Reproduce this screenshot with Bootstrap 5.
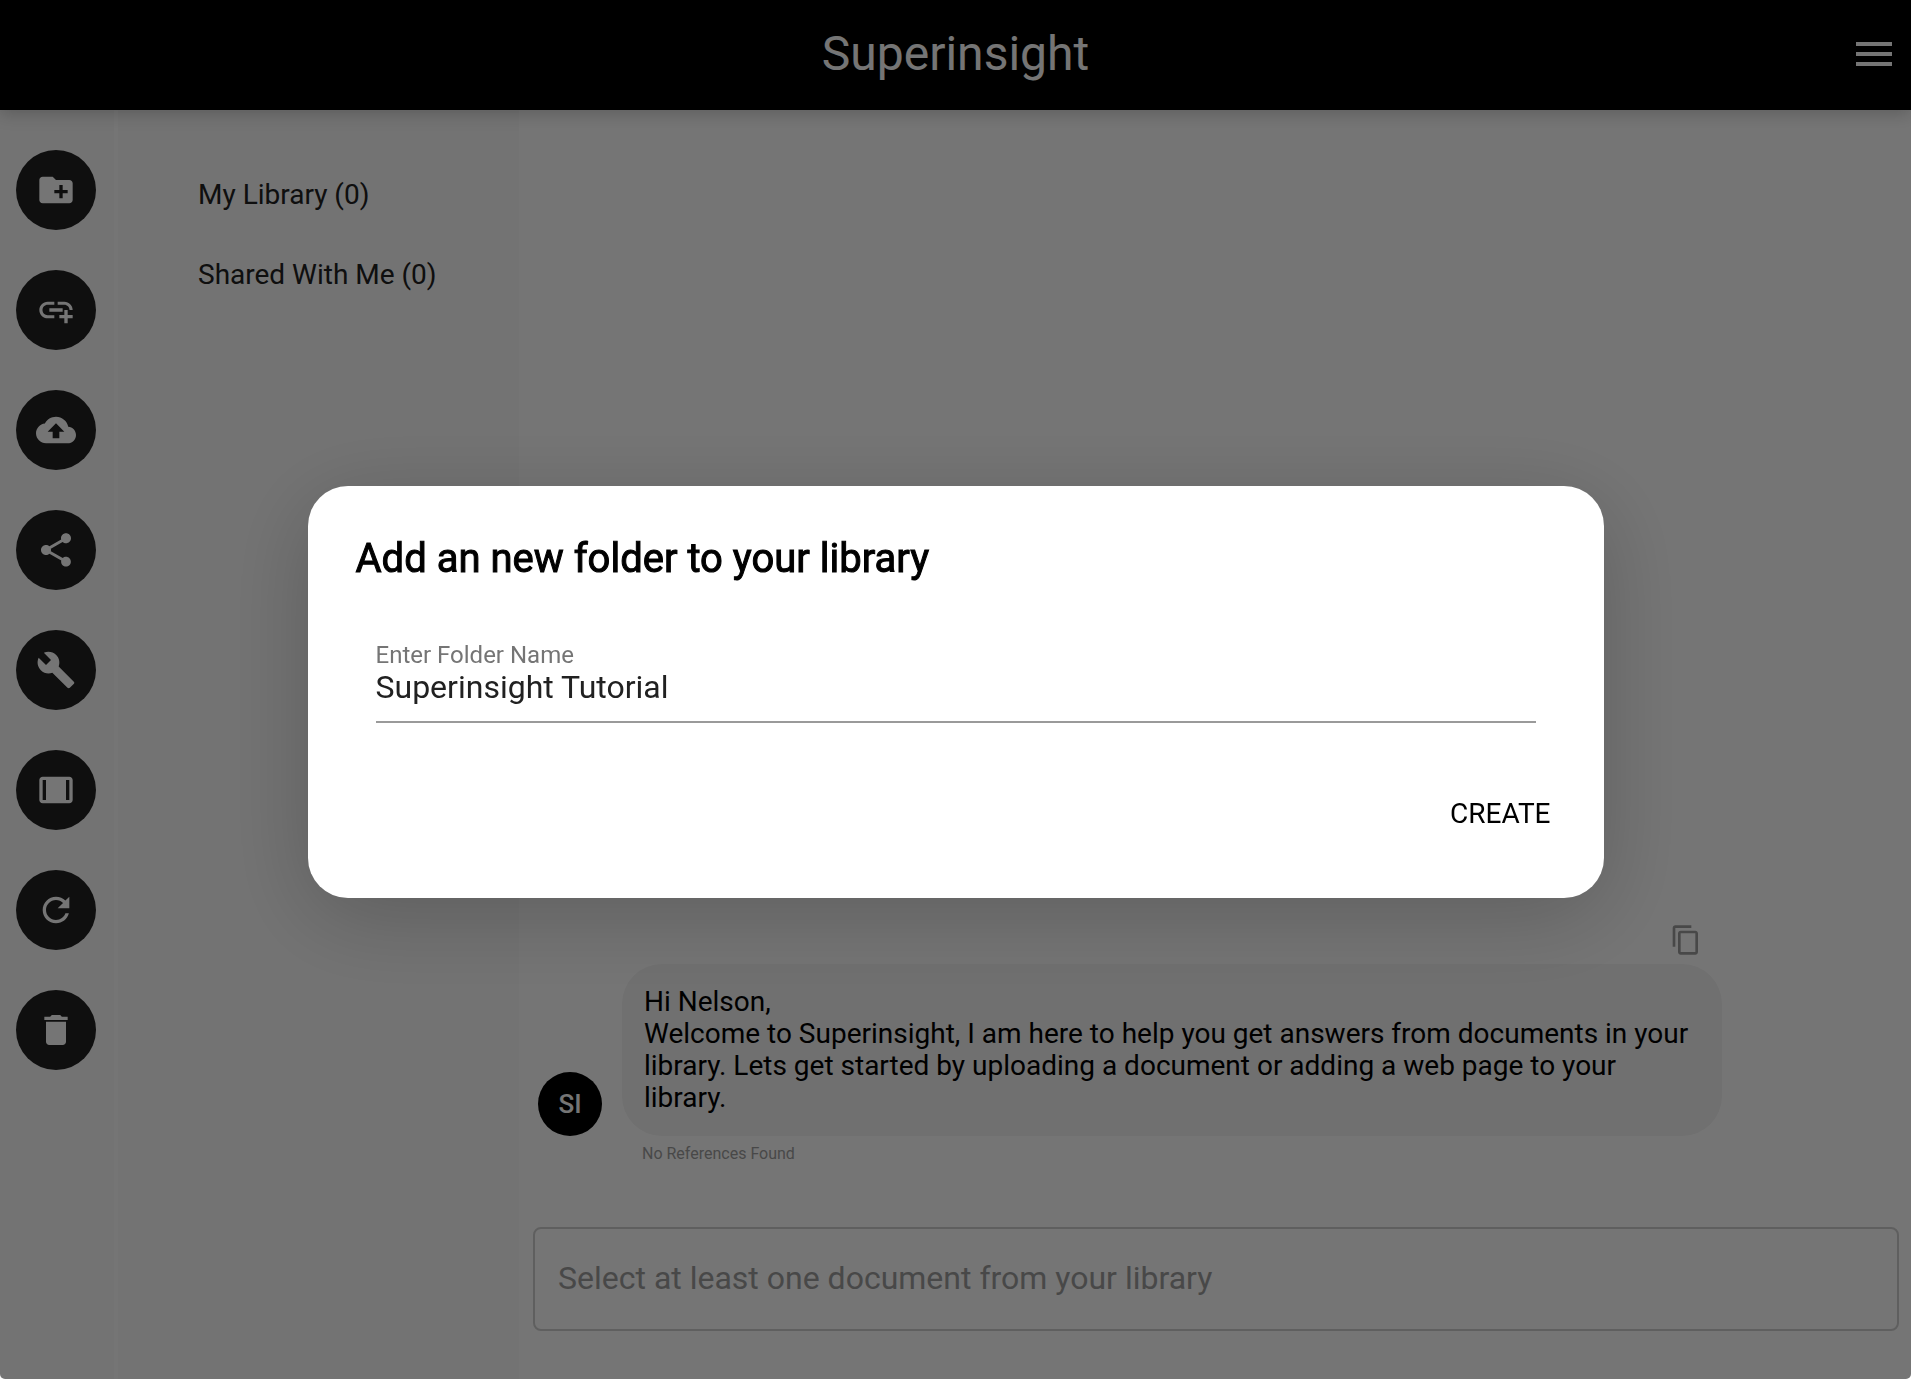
<!DOCTYPE html>
<html lang="en">
<head>
<meta charset="utf-8">
<meta name="viewport" content="width=device-width, initial-scale=1">
<title>Superinsight</title>
<link href="https://cdn.jsdelivr.net/npm/bootstrap@5.3.0/dist/css/bootstrap.min.css" rel="stylesheet">
<style>
body { font-family: Roboto, "Liberation Sans", sans-serif; font-size: 28px; line-height: 32px; color: #212121; background: #fff; }
svg { display: block; fill: currentColor; }

.app-header { height: 110px; padding-bottom: 2px; background: #000; color: #fff; box-shadow: 0 4px 16px rgba(0,0,0,.2); z-index: 1; }
.app-title { font-size: 48px; line-height: 56px; font-weight: 400; }
.menu-btn { right: 13px; }

.rail { width: 114px; padding: 40px 16px; gap: 40px; background: #fafafa; }
.rail-btn { width: 80px; height: 80px; background: #212121; color: #fff; }
.library { width: 401px; margin-left: 4px; padding: 69px 16px 0 80px; gap: 48px; background: #fafafa; }
.library a { color: #212121; }

.chat { padding: 0 12px 48px 14px; gap: 63px; }
.message { max-width: 1189px; padding-left: 5px; }
.copy-btn { margin: 0 20px 8px; color: #9e9e9e; }
.avatar { width: 64px; height: 64px; margin-right: 20px; background: #000; color: #fff; font-size: 26px; font-weight: 500; }
.bubble { padding: 22px; border-radius: 40px; background: #f4f4f4; color: #000; }
.references { margin: 8px 0 0 104px; font-size: 16px; line-height: 20px; color: #9e9e9e; }
.prompt-box { height: 104px; padding: 0 23px 2px; border: 2px solid #cfcfcf; border-radius: 8px; font-size: 32px; background: #fff; }
.prompt-box::placeholder { color: #9e9e9e; opacity: 1; }

.modal-backdrop { --bs-backdrop-opacity: .54; border-radius: 0 0 5px 5px; width: 100%; height: 100%; }
.folder-dialog { width: 100%; max-width: 1296px; }
.folder-content { border: 0; border-radius: 40px; padding: 48px 32px 52px 48px; background: #fff; color: #000; box-shadow: 0 18px 90px rgba(0,0,0,.2); }
.folder-title { font-size: 40px; line-height: 50px; font-weight: 400; -webkit-text-stroke: 1px #000; }
.folder-field { margin: 58px 36px 59px 20px; }
.folder-field label { font-size: 24px; line-height: 26px; color: #757575; }
.folder-field input { height: 55px; padding: 0 0 15px; border: 0; border-bottom: 2px solid #9a9a9a; border-radius: 0; font-size: 32px; line-height: 38px; color: #212121; background: none; }
.create-btn { padding: 16px 21px; font-size: 28px; line-height: 32px; color: #000; }
</style>
<script src="https://cdn.jsdelivr.net/npm/bootstrap@5.3.0/dist/js/bootstrap.bundle.min.js"></script>
</head>
<body>
<div class="d-flex flex-column min-vh-100">
  <header class="app-header position-relative d-flex align-items-center justify-content-center">
    <h1 class="app-title m-0">Superinsight</h1>
    <button type="button" class="menu-btn btn p-0 border-0 text-white position-absolute" aria-label="Menu">
      <svg width="48" height="48" viewBox="0 0 24 24"><path d="M3 18h18v-2H3v2zm0-5h18v-2H3v2zm0-7v2h18V6H3z"/></svg>
    </button>
  </header>

  <div class="d-flex flex-grow-1">
    <nav class="rail d-flex flex-column flex-shrink-0" aria-label="Actions">
      <button type="button" class="rail-btn btn rounded-circle p-0 border-0 d-flex align-items-center justify-content-center" aria-label="New folder">
        <svg width="40" height="40" viewBox="0 0 24 24"><path d="M20 6h-8l-2-2H4c-1.110 0-1.990.89-1.990 2L2 18c0 1.110.89 2 2 2h16c1.110 0 2-.89 2-2V8c0-1.110-.89-2-2-2zm-1 8h-3v3h-2v-3h-3v-2h3V9h2v3h3v2z"/></svg>
      </button>
      <button type="button" class="rail-btn btn rounded-circle p-0 border-0 d-flex align-items-center justify-content-center" aria-label="Add link">
        <svg width="40" height="40" viewBox="0 0 24 24"><path d="M8 11h8v2H8v-2zm12.100 1H22c0-2.760-2.240-5-5-5h-4v1.900h4c1.710 0 3.100 1.390 3.100 3.100zM3.900 12c0-1.710 1.390-3.100 3.100-3.100h4V7H7c-2.760 0-5 2.240-5 5s2.240 5 5 5h4v-1.900H7c-1.710 0-3.100-1.390-3.100-3.100zM19 12h-2v3h-3v2h3v3h2v-3h3v-2h-3v-3z"/></svg>
      </button>
      <button type="button" class="rail-btn btn rounded-circle p-0 border-0 d-flex align-items-center justify-content-center" aria-label="Upload">
        <svg width="40" height="40" viewBox="0 0 24 24"><path d="M19.350 10.040C18.670 6.590 15.640 4 12 4 9.110 4 6.600 5.640 5.350 8.040 2.340 8.360 0 10.910 0 14c0 3.310 2.690 6 6 6h13c2.760 0 5-2.240 5-5 0-2.640-2.050-4.780-4.650-4.960zM14 13v4h-4v-4H7l5-5 5 5h-3z"/></svg>
      </button>
      <button type="button" class="rail-btn btn rounded-circle p-0 border-0 d-flex align-items-center justify-content-center" aria-label="Share">
        <svg width="40" height="40" viewBox="0 0 24 24"><path d="M18 16.080c-.76 0-1.440.3-1.960.77L8.910 12.700c.05-.23.09-.46.09-.7s-.04-.47-.09-.7l7.050-4.110c.54.5 1.250.81 2.040.81 1.660 0 3-1.340 3-3s-1.340-3-3-3-3 1.340-3 3c0 .24.040.47.090.7L8.040 9.810C7.500 9.310 6.790 9 6 9c-1.660 0-3 1.340-3 3s1.340 3 3 3c.79 0 1.500-.31 2.040-.81l7.120 4.160c-.05.21-.08.43-.08.65 0 1.610 1.310 2.920 2.920 2.920s2.920-1.310 2.920-2.920-1.310-2.920-2.920-2.920z"/></svg>
      </button>
      <button type="button" class="rail-btn btn rounded-circle p-0 border-0 d-flex align-items-center justify-content-center" aria-label="Tools">
        <svg width="40" height="40" viewBox="0 0 24 24"><path d="M22.700 19l-9.100-9.100c.9-2.300.4-5-1.500-6.900-2-2-5-2.400-7.400-1.300L9 6 6 9 1.600 4.700C.4 7.100.9 10.100 2.900 12.100c1.900 1.900 4.600 2.400 6.900 1.500l9.100 9.100c.4.4 1 .4 1.400 0l2.300-2.300c.5-.4.5-1.100.1-1.400z"/></svg>
      </button>
      <button type="button" class="rail-btn btn rounded-circle p-0 border-0 d-flex align-items-center justify-content-center" aria-label="Panels">
        <svg width="40" height="40" viewBox="0 0 24 24"><path fill-rule="evenodd" d="M4 4h16c1.100 0 2 .9 2 2v12c0 1.100-.9 2-2 2H4c-1.100 0-2-.9-2-2V6c0-1.100.9-2 2-2zM4 6v12h2V6H4zM18 6v12h2V6h-2z"/></svg>
      </button>
      <button type="button" class="rail-btn btn rounded-circle p-0 border-0 d-flex align-items-center justify-content-center" aria-label="Refresh">
        <svg width="40" height="40" viewBox="0 0 24 24"><path d="M17.650 6.350C16.200 4.900 14.210 4 12 4c-4.420 0-7.990 3.580-7.990 8s3.570 8 7.990 8c3.730 0 6.840-2.550 7.730-6h-2.080c-.82 2.330-3.040 4-5.650 4-3.310 0-6-2.690-6-6s2.690-6 6-6c1.660 0 3.140.69 4.220 1.780L13 11h7V4l-2.350 2.350z"/></svg>
      </button>
      <button type="button" class="rail-btn btn rounded-circle p-0 border-0 d-flex align-items-center justify-content-center" aria-label="Delete">
        <svg width="40" height="40" viewBox="0 0 24 24"><path d="M6 19c0 1.100.9 2 2 2h8c1.100 0 2-.9 2-2V7H6v12zM19 4h-3.500l-1-1h-5l-1 1H5v2h14V4z"/></svg>
      </button>
    </nav>

    <aside class="library d-flex flex-column flex-shrink-0">
      <a href="#" class="text-decoration-none">My Library (0)</a>
      <a href="#" class="text-decoration-none">Shared With Me (0)</a>
    </aside>

    <main class="chat d-flex flex-column justify-content-end flex-grow-1">
      <div class="message d-flex flex-column">
        <button type="button" class="copy-btn btn p-0 border-0 align-self-end" aria-label="Copy">
          <svg width="32" height="32" viewBox="0 0 24 24"><path d="M16 1H4c-1.100 0-2 .9-2 2v14h2V3h12V1zm3 4H8c-1.100 0-2 .9-2 2v14c0 1.100.9 2 2 2h11c1.100 0 2-.9 2-2V7c0-1.100-.9-2-2-2zm0 16H8V7h11v14z"/></svg>
        </button>
        <div class="d-flex align-items-end">
          <div class="avatar rounded-circle d-flex align-items-center justify-content-center flex-shrink-0">SI</div>
          <div class="bubble flex-grow-1"><p class="m-0">Hi Nelson,<br>Welcome to Superinsight, I am here to help you get answers from documents in your library. Lets get started by uploading a document or adding a web page to your library.</p></div>
        </div>
        <p class="references mb-0">No References Found</p>
      </div>
      <input type="text" class="prompt-box form-control" placeholder="Select at least one document from your library" aria-label="Question">
    </main>
  </div>
</div>

<div class="modal-backdrop show"></div>
<div class="modal show d-flex align-items-center justify-content-center pt-1" role="dialog" aria-modal="true" aria-labelledby="folderTitle">
  <div class="modal-dialog folder-dialog m-0">
    <form class="modal-content folder-content">
      <h2 class="folder-title m-0" id="folderTitle">Add an new folder to your library</h2>
      <div class="folder-field d-flex flex-column">
        <label for="folderName">Enter Folder Name</label>
        <input type="text" class="form-control shadow-none" id="folderName" value="Superinsight Tutorial">
      </div>
      <button type="button" class="create-btn btn border-0 align-self-end">CREATE</button>
    </form>
  </div>
</div>
</body>
</html>
